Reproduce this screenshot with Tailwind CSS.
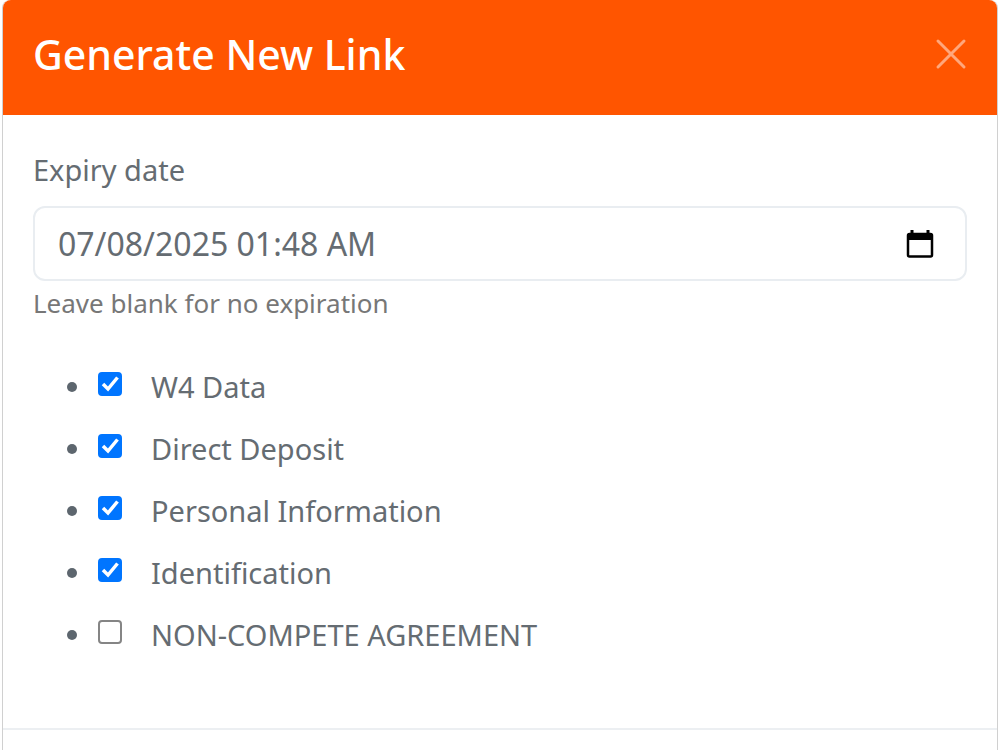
<!DOCTYPE html>
<html lang="en">
<head>
<meta charset="utf-8">
<meta name="viewport" content="width=device-width, initial-scale=1">
<title>Generate New Link</title>
<script src="https://cdn.jsdelivr.net/npm/@tailwindcss/browser@4"></script>
</head>
<body class="bg-white px-0.5 font-['Noto_Sans',sans-serif] text-[#656c72]">
<main role="dialog" aria-labelledby="title" class="min-h-screen rounded-t-lg border-x border-[#d0d0d0] bg-white">
  <header class="flex h-[115px] items-center justify-between rounded-t-lg bg-[#ff5500] pr-7 pl-[30px] pb-2">
    <h1 id="title" class="text-[41px] leading-[60px] font-medium text-white">Generate New Link</h1>
    <button type="button" aria-label="Close" class="text-[#ffa77c]">
      <svg class="size-9" viewBox="0 0 36 36" fill="none" stroke="currentColor" stroke-width="3" stroke-linecap="round"><path d="M5 5 31 31M31 5 5 31"/></svg>
    </button>
  </header>
  <form>
    <div class="border-b-2 border-[#eceff2] px-[30px] pt-[35px] pb-[62px]">
      <label for="expiry" class="block text-[29px] leading-10">Expiry date</label>
      <div class="mt-4 flex h-[75px] items-center rounded-[12px] border-2 border-[#e9edf1] pr-[30px] pl-[23px]">
        <input id="expiry" type="text" value="07/08/2025 01:48 AM" aria-describedby="hint" class="min-w-0 flex-1 text-[32px] leading-10 outline-none">
        <button type="button" aria-label="Choose date" class="text-black">
          <svg class="h-[30px] w-8" viewBox="0 0 32 30" fill="none"><path d="M5 4H29V11H5Z" fill="currentColor" stroke="none"/><path d="M9 1V5M25 1V5" stroke="currentColor" stroke-width="3"/><rect x="5" y="5" width="24" height="22.500" rx="1.500" stroke="currentColor" stroke-width="2.500"/></svg>
        </button>
      </div>
      <p id="hint" class="mt-0.5 text-[26px] leading-10 text-[#777]">Leave blank for no expiration</p>
      <ul class="mt-[33px] pl-[34px] text-[29px] leading-[62px]">
        <li class="flex h-[62px] items-center">
          <span class="mr-5 size-2.5 rounded-full bg-[#5d666e]"></span>
          <span class="mb-1.5 grid size-[26px]">
            <input id="w4" type="checkbox" checked class="peer col-start-1 row-start-1 m-px size-6 appearance-none rounded-[4px] border-2 border-[#858585] checked:border-[#0075ff] checked:bg-[#0075ff]">
            <svg class="pointer-events-none invisible col-start-1 row-start-1 size-[26px] peer-checked:visible" viewBox="0 0 26 26" fill="none" stroke="white" stroke-width="3.500"><path d="m6 13 5 5L20.500 6.500"/></svg>
          </span>
          <label for="w4" class="ml-7">W4 Data</label>
        </li>
        <li class="flex h-[62px] items-center">
          <span class="mr-5 size-2.5 rounded-full bg-[#5d666e]"></span>
          <span class="mb-1.5 grid size-[26px]">
            <input id="deposit" type="checkbox" checked class="peer col-start-1 row-start-1 m-px size-6 appearance-none rounded-[4px] border-2 border-[#858585] checked:border-[#0075ff] checked:bg-[#0075ff]">
            <svg class="pointer-events-none invisible col-start-1 row-start-1 size-[26px] peer-checked:visible" viewBox="0 0 26 26" fill="none" stroke="white" stroke-width="3.500"><path d="m6 13 5 5L20.500 6.500"/></svg>
          </span>
          <label for="deposit" class="ml-7">Direct Deposit</label>
        </li>
        <li class="flex h-[62px] items-center">
          <span class="mr-5 size-2.5 rounded-full bg-[#5d666e]"></span>
          <span class="mb-1.5 grid size-[26px]">
            <input id="personal" type="checkbox" checked class="peer col-start-1 row-start-1 m-px size-6 appearance-none rounded-[4px] border-2 border-[#858585] checked:border-[#0075ff] checked:bg-[#0075ff]">
            <svg class="pointer-events-none invisible col-start-1 row-start-1 size-[26px] peer-checked:visible" viewBox="0 0 26 26" fill="none" stroke="white" stroke-width="3.500"><path d="m6 13 5 5L20.500 6.500"/></svg>
          </span>
          <label for="personal" class="ml-7">Personal Information</label>
        </li>
        <li class="flex h-[62px] items-center">
          <span class="mr-5 size-2.5 rounded-full bg-[#5d666e]"></span>
          <span class="mb-1.5 grid size-[26px]">
            <input id="identification" type="checkbox" checked class="peer col-start-1 row-start-1 m-px size-6 appearance-none rounded-[4px] border-2 border-[#858585] checked:border-[#0075ff] checked:bg-[#0075ff]">
            <svg class="pointer-events-none invisible col-start-1 row-start-1 size-[26px] peer-checked:visible" viewBox="0 0 26 26" fill="none" stroke="white" stroke-width="3.500"><path d="m6 13 5 5L20.500 6.500"/></svg>
          </span>
          <label for="identification" class="ml-7">Identification</label>
        </li>
        <li class="flex h-[62px] items-center">
          <span class="mr-5 size-2.5 rounded-full bg-[#5d666e]"></span>
          <span class="mb-1.5 grid size-[26px]">
            <input id="compete" type="checkbox" class="peer col-start-1 row-start-1 m-px size-6 appearance-none rounded-[4px] border-2 border-[#858585] checked:border-[#0075ff] checked:bg-[#0075ff]">
            <svg class="pointer-events-none invisible col-start-1 row-start-1 size-[26px] peer-checked:visible" viewBox="0 0 26 26" fill="none" stroke="white" stroke-width="3.500"><path d="m6 13 5 5L20.500 6.500"/></svg>
          </span>
          <label for="compete" class="ml-7">NON-COMPETE AGREEMENT</label>
        </li>
      </ul>
    </div>
  </form>
</main>
</body>
</html>
